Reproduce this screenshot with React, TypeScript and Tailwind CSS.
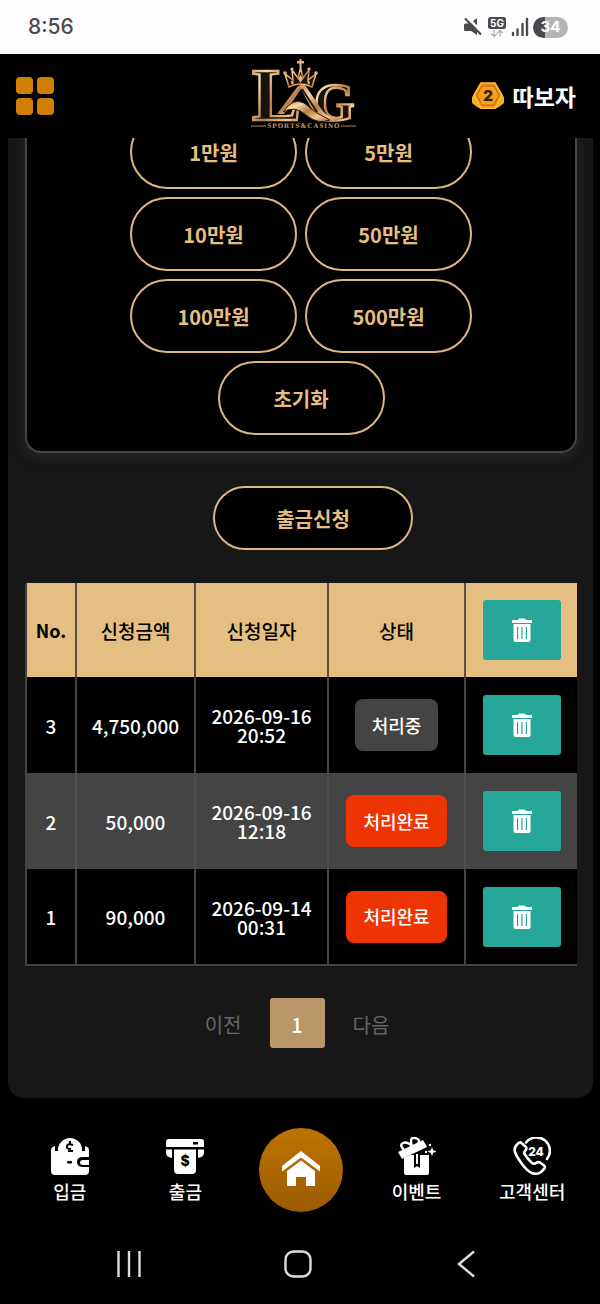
import type { ReactNode } from 'react';

const AMOUNTS = ['1만원', '5만원', '10만원', '50만원', '100만원', '500만원', '초기화'];

const ROWS = [
  { no: 3, amount: '4,750,000', date: '2026-09-16', time: '20:52', done: false },
  { no: 2, amount: '50,000', date: '2026-09-16', time: '12:18', done: true },
  { no: 1, amount: '90,000', date: '2026-09-14', time: '00:31', done: true },
];

function StatusBar() {
  return (
    <div className="flex h-[54px] items-center justify-between bg-[#fdfdff] pl-7 pr-8 text-[#4b4b4d]">
      <span className="font-['Inter'] text-[21px] font-medium">8:56</span>
      <div className="flex items-center gap-1">
        <svg className="h-5 w-5" viewBox="0 0 20 20" fill="currentColor">
          <path d="M2 6.500h5L14 1v17l-6-4H2.500Q1 14 1 12.500V8Q1 6.500 2 6.500Z" />
          <path d="M3.500 0 20 16" stroke="#fdfdff" strokeWidth="3" />
          <path d="M2 1.500 18 17.500" stroke="currentColor" strokeWidth="2.200" />
        </svg>
        <svg className="h-5 w-5" viewBox="0 0 20 20">
          <rect x="1" y="0" width="18" height="12" rx="2.500" fill="#4b4b4d" />
          <text x="10" y="9.800" textAnchor="middle" fontFamily="Inter" fontSize="10" fontWeight="700" fill="#fff">5G</text>
          <path d="M7 13v6M4 16.500l3 2.800 3-2.800M13 19.500v-6M10.500 16l2.500-2.600 2.800 2.600" fill="none" stroke="#b0b0b2" strokeWidth="1.300" />
        </svg>
        <svg className="h-5 w-[18px]" viewBox="0 0 18 20" stroke="currentColor" strokeWidth="2.400" strokeLinecap="round">
          <path d="M2 16v2M6.500 12.500v5.500M11.500 7v11M16 2v16" />
        </svg>
        <span className="flex h-[21px] w-[35px] items-center justify-center rounded-full bg-linear-to-r from-[#4b4b4d] from-34% to-[#b5b5b7] to-34% font-['Inter'] text-[15px] font-bold text-white">
          34
        </span>
      </div>
    </div>
  );
}

function Logo() {
  return (
    <svg className="h-[84px] w-[108px]" viewBox="0 0 108 84" role="img" aria-label="LAG Sports & Casino">
      <defs>
        <linearGradient id="gold" x1="0" y1="0" x2="1" y2="1">
          <stop offset="0" stopColor="#c08452" />
          <stop offset=".25" stopColor="#f7d6a4" />
          <stop offset=".5" stopColor="#b97c47" />
          <stop offset=".75" stopColor="#f2c58c" />
          <stop offset="1" stopColor="#a66a38" />
        </linearGradient>
      </defs>
      <g fontFamily="Liberation Serif" fontWeight="700" fill="#16130f" stroke="url(#gold)" strokeWidth="2.400">
        <text x="2" y="66" fontSize="74">L</text>
        <text x="64" y="66" fontSize="52">G</text>
      </g>
      {/* the A, with its crossbar sweeping under the G */}
      <path d="M46 33h8L70 58 58 54 44 50 28 58Z" fill="#000" />
      <path d="M48 32h5L34 60H27Z" fill="url(#gold)" />
      <path d="M49 31h6L72 56Q78 65 92 64 76 73 65 61Z" fill="url(#gold)" />
      <path d="M52 35 67 58" stroke="#2b1a0d" strokeWidth="2" />
      <path d="M33 58Q43 43 54 49 66 60 80 66 68 71 56 61 44 51 33 58Z" fill="url(#gold)" stroke="#2b1a0d" strokeWidth="1" />
      <path d="M39 33 35 20 43 26 42 16 48 24 50.500 14 53 24 59 16 58 26 66 20 62 33Q50 27 39 33Z" fill="#1f140c" stroke="url(#gold)" strokeWidth="1.500" />
      <g fill="#e3b47d">
        <circle cx="35" cy="19" r="1.800" />
        <circle cx="42" cy="15" r="1.600" />
        <circle cx="59" cy="15" r="1.600" />
        <circle cx="66" cy="19" r="1.800" />
        <path d="M49.500 5h2v2h2.500v2.500h-2.500V14h-2V9.500H47V7h2.500ZM50.500 21l2.500 4-2.500 4-2.500-4ZM42 26l2 3-2 2-1-3ZM59 26l1 3-1 2-2-3Z" />
      </g>
      <path d="M1 72h15M91 72h15" stroke="#b98350" strokeWidth="1" />
      <text x="54" y="74" textAnchor="middle" fontFamily="Liberation Serif" fontSize="7" fontWeight="700" textRendering="geometricPrecision" fill="#cda071" letterSpacing="1">SPORTS&amp;CASINO</text>
    </svg>
  );
}

function Header() {
  return (
    <header className="relative z-10 grid h-[84px] grid-cols-3 items-center bg-black px-4">
      <button type="button" aria-label="메뉴" className="grid w-[38px] grid-cols-2 gap-1">
        {[0, 1, 2, 3].map((i) => (
          <span key={i} className="h-[17px] rounded-[4px] bg-[#d17e04]" />
        ))}
      </button>
      <a href="#home" className="justify-self-center pl-2">
        <Logo />
      </a>
      <div className="flex items-center gap-2 justify-self-end pr-2">
        <svg className="h-7 w-[34px]" viewBox="0 0 34 28">
          <path d="M6 9 1 15v6l5 4 4 2h14l4-2 5-4v-6l-5-6Z" fill="#f3ae22" />
          <path d="M10 1h14l7 12-7 13H10L3 13Z" fill="#e88e14" stroke="#ffc43b" strokeWidth="1.500" />
          <path d="M11 4h12l5 9-5 10H11L6 13Z" fill="#f79d20" stroke="#c76806" />
          <text x="17" y="19" textAnchor="middle" fontFamily="Inter" fontSize="15" fontWeight="900" fill="#302413">2</text>
        </svg>
        <span className="text-[23px] font-bold text-white">따보자</span>
      </div>
    </header>
  );
}

function TrashButton({ label }: { label: string }) {
  return (
    <button type="button" aria-label={label} className="inline-flex h-[60px] w-[78px] items-center justify-center rounded-[3px] bg-[#27a69a] align-middle">
      <svg className="h-6 w-[22px]" viewBox="0 0 22 24" fill="#fff">
        <path d="M1.500 2H7l1-1.500h6L15 2h5.500q.5 0 .5.500V5H1V2.500Q1 2 1.500 2Z" />
        <path fillRule="evenodd" d="M2.500 6h17V22q0 2-2 2h-13q-2 0-2-2ZM6 9v12h1.200V9Zm4.400 0v12h1.200V9Zm4.400 0v12H16V9Z" />
      </svg>
    </button>
  );
}

function RequestTable() {
  return (
    <table className="w-full table-fixed border-collapse border-b-2 border-l-2 border-[#444] text-center text-[19px] leading-[19px] font-medium text-white">
      <colgroup>
        <col className="w-[50px]" />
        <col className="w-[119px]" />
        <col className="w-[133px]" />
        <col className="w-[137px]" />
        <col />
      </colgroup>
      <thead>
        <tr className="h-[94px] divide-x-2 divide-[#5a5042] bg-[#e5be82] text-black">
          <th className="text-[18px] font-bold">No.</th>
          <th className="font-medium">신청금액</th>
          <th className="font-medium">신청일자</th>
          <th className="font-medium">상태</th>
          <th>
            <TrashButton label="전체 삭제" />
          </th>
        </tr>
      </thead>
      <tbody>
        {ROWS.map((row) => (
          <tr key={row.no} className="h-24 divide-x-2 divide-[#444] bg-black even:divide-[#4f4f4f] even:bg-[#444]">
            <td>{row.no}</td>
            <td>{row.amount}</td>
            <td>
              {row.date}
              <br />
              {row.time}
            </td>
            <td>
              <span
                className={
                  row.done
                    ? 'inline-flex h-[52px] items-center rounded-lg bg-[#ec3502] px-[17px] align-middle text-[18px]'
                    : 'inline-flex h-[52px] items-center rounded-lg bg-[#444] px-[17px] align-middle text-[18px]'
                }
              >
                {row.done ? '처리완료' : '처리중'}
              </span>
            </td>
            <td>
              <TrashButton label={`${row.no}번 삭제`} />
            </td>
          </tr>
        ))}
      </tbody>
    </table>
  );
}

function NavItem({ label, children }: { label: string; children: ReactNode }) {
  return (
    <a href="#menu" className="flex flex-col items-center gap-1 text-[18px] leading-6 font-medium whitespace-nowrap text-white">
      <svg className="h-[38px] w-[38px]" viewBox="0 0 38 38" fill="#fff">
        {children}
      </svg>
      {label}
    </a>
  );
}

function BottomNav() {
  return (
    <nav className="grid grid-cols-5 items-center pt-[30px] pr-[10px] pl-3">
      <NavItem label="입금">
        <path d="M0 13q0-3 4-4v5h3a12 12 0 0 1 24 0h3V9q4 1 4 4v7h-6q-6 0-6 5t6 5h6v4q0 4-4 4H4q-4 0-4-4Z" />
        <path d="M7 13a12 12 0 0 1 24 0v2H7Z" />
        <path d="M38 23h-6q-3 0-3 2.500t3 2.500h6Z" />
        <path d="M19 4v3M22 8q-5-2-6 1t4 3M17 14h5" fill="none" stroke="#000" strokeWidth="2" />
        <rect x="16" y="24" width="5" height="2.500" rx="1" fill="#000" />
      </NavItem>
      <NavItem label="출금">
        <path fillRule="evenodd" d="M3 2h32q3 0 3 3v5H0V5q0-3 3-3ZM27 5v2.500h5V5Z" />
        <path d="M0 12.500h6V21Q0 20 0 16ZM32 12.500h6V16q0 4-6 5ZM8 12.500h22V33q0 4-4 4H12q-4 0-4-4Z" />
        <text x="19" y="29" textAnchor="middle" fontFamily="Inter" fontSize="14" fontWeight="800" fill="#000">$</text>
      </NavItem>
      <a href="#home" aria-label="홈" className="flex h-[84px] w-[84px] items-center justify-center justify-self-center rounded-full bg-linear-to-b from-[#bd7400] to-[#9b5b00]">
        <svg className="h-10 w-10" viewBox="0 0 40 40" fill="#fff">
          <path d="M20 1 39 16v5.500L20 7.500 1 21.500V16Z" />
          <path d="m20 10.500 14 10.500v15H25V27H15v9H6V21Z" />
        </svg>
      </a>
      <NavItem label="이벤트">
        <path d="m0 15 25-12 4 7L4 22Z" />
        <path d="M6 13Q1 8 5 6t9 3q-3-9 3-8t3 6" fill="none" stroke="#fff" strokeWidth="2.400" />
        <path d="M6 21 12 18h4v13l3-2 3 2V18h9v18q0 2-2 2H8q-2 0-2-2Z" />
        <path d="M18 17h2v10h-2ZM34 10l1.300 3.200L38.500 14.500l-3.200 1.300L34 19l-1.300-3.200-3.200-1.300 3.200-1.300Z" />
        <circle cx="32" cy="8" r="1.200" />
        <circle cx="28" cy="15" r="1.200" />
      </NavItem>
      <NavItem label="고객센터">
        <g fill="none" stroke="#fff" strokeWidth="2.600" strokeLinejoin="round" strokeLinecap="round">
          <path d="M13 5.500A13.300 13.300 0 1 1 34 22" />
          <path d="M8.500 6Q7 4.500 5 6.500 .5 10.500 2 15T9 27 19 36q5 2 9-1l3-3q2-2-.5-4l-3.500-2.500q-2-1-4 .5-2 1.500-4 0-4-3.500-7.500-9-1-2 1-3.500 1.500-1.500 .5-3.500Z" />
        </g>
        <text x="23" y="18.500" textAnchor="middle" fontFamily="Inter" fontSize="12" fontWeight="800" fill="#fff">24</text>
      </NavItem>
    </nav>
  );
}

function SystemNav() {
  return (
    <div className="flex h-[92px] items-center justify-around pt-3 pr-12 pl-11">
      <button type="button" aria-label="최근 앱">
        <svg className="h-7 w-7" viewBox="0 0 28 28" stroke="#ddd" strokeWidth="2.400">
          <path d="M3.500 1v26M14 1v26M24.500 1v26" />
        </svg>
      </button>
      <button type="button" aria-label="홈 화면">
        <svg className="h-7 w-7" viewBox="0 0 28 28" fill="none" stroke="#ddd" strokeWidth="2.400">
          <rect x="1.500" y="1.500" width="25" height="25" rx="8" />
        </svg>
      </button>
      <button type="button" aria-label="뒤로">
        <svg className="h-7 w-7" viewBox="0 0 28 28" fill="none" stroke="#ddd" strokeWidth="2.400">
          <path d="M21 1.500 6 14l15 12.500" />
        </svg>
      </button>
    </div>
  );
}

export default function App() {
  return (
    <div className="min-h-screen overflow-hidden bg-black font-['Noto_Sans_CJK_KR',sans-serif]">
      <StatusBar />
      <Header />
      <main className="mr-[7px] ml-2 rounded-b-2xl bg-[#171717] pr-4 pb-[50px] pl-[17px]">
        <section className="-mt-[25px] flex flex-wrap justify-center gap-2 rounded-b-2xl border-2 border-[#444] bg-black px-20 pb-4 shadow-[0_4px_10px_2px_#242424]">
          {AMOUNTS.map((amount) => (
            <button
              key={amount}
              type="button"
              className="h-[74px] w-[167px] rounded-full border-2 border-[#dcb77f] bg-black pt-0.5 text-[20px] font-bold text-[#e5be82]"
            >
              {amount}
            </button>
          ))}
        </section>
        <div className="flex justify-center py-[33px] pl-6">
          <button
            type="button"
            className="h-16 w-[200px] rounded-full border-2 border-[#dcb77f] bg-black pt-0.5 text-[20px] font-bold text-[#e5be82]"
          >
            출금신청
          </button>
        </div>
        <RequestTable />
        <div className="flex items-center justify-center gap-7 pt-8 pr-2 text-[20px] text-[#666]">
          <button type="button" className="pt-1">이전</button>
          <button type="button" className="h-[50px] w-[55px] rounded-[3px] bg-[#b99769] pt-1 font-medium text-white">
            1
          </button>
          <button type="button" className="pt-1">다음</button>
        </div>
      </main>
      <BottomNav />
      <SystemNav />
    </div>
  );
}
